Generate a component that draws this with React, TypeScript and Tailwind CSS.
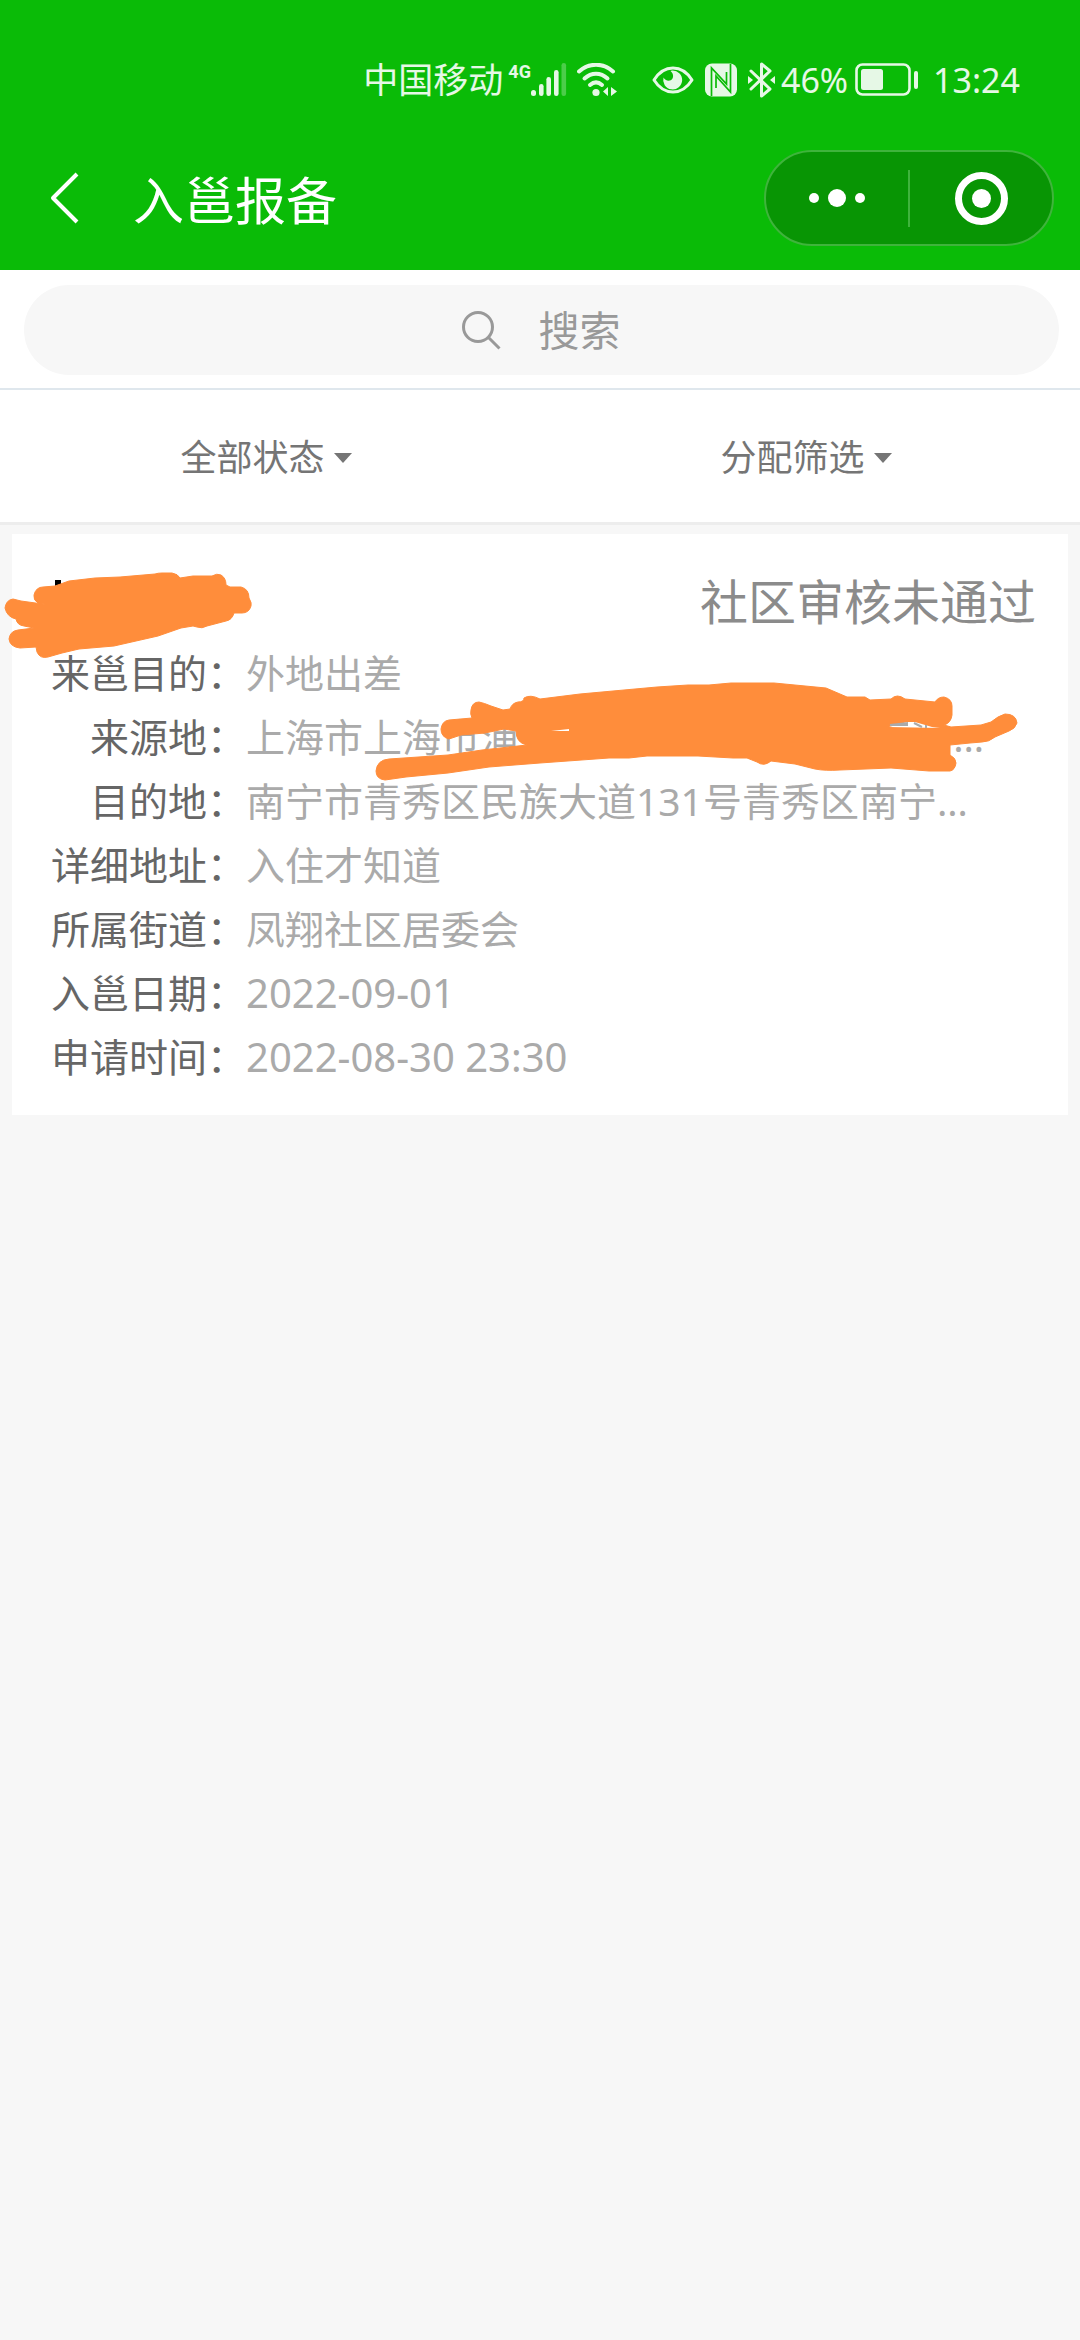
import React from "react";

type Row = { label: string; value: React.ReactNode };

const rows: Row[] = [
  { label: "来邕目的：", value: "外地出差" },
  {
    label: "来源地：",
    value: (
      <span className="flex w-[738px] max-w-full justify-between">
        <span>上海市上海市浦</span>
        <span>…</span>
      </span>
    ),
  },
  {
    label: "目的地：",
    value: "南宁市青秀区民族大道131号青秀区南宁…",
  },
  { label: "详细地址：", value: "入住才知道" },
  { label: "所属街道：", value: "凤翔社区居委会" },
  { label: "入邕日期：", value: <time className="text-[40px]">2022-09-01</time> },
  { label: "申请时间：", value: <time className="text-[40px]">2022-08-30 23:30</time> },
];

function SignalIcon() {
  return (
    <svg className="h-[34px] w-[36px]" viewBox="0 0 36 34" fill="currentColor" aria-label="信号">
      <rect x="0" y="27" width="5" height="6" rx="2.5" />
      <rect x="8" y="21" width="4.6" height="12" rx="2.3" />
      <rect x="15.4" y="14" width="4.6" height="19" rx="2.3" />
      <rect x="23" y="7" width="4.6" height="26" rx="2.3" />
      <rect x="30.5" y="0" width="4.6" height="33" rx="2.3" opacity="0.3" />
    </svg>
  );
}

function WifiIcon() {
  return (
    <svg className="h-[34px] w-[40px]" viewBox="0 0 40 34" fill="none" stroke="currentColor" strokeWidth="4" strokeLinecap="round" aria-label="无线网络">
      <path d="M2 8.5C12 -0.5 26 -0.5 36 8.5" />
      <path d="M7.5 15.5C14.5 9 23.5 9 30.5 15.5" />
      <path d="M13 22C17 18.5 21 18.5 25 22" />
      <circle cx="19" cy="29.5" r="3.6" fill="currentColor" stroke="none" />
      <path d="M31 24v9l-5-4.5zM34 24v9l6-4.5z" fill="currentColor" stroke="none" />
    </svg>
  );
}

function EyeIcon() {
  return (
    <svg className="h-[28px] w-[42px]" viewBox="0 0 42 28" aria-label="护眼模式">
      <path d="M2 14C12 -2 30 -2 40 14C30 30 12 30 2 14Z" fill="none" stroke="currentColor" strokeWidth="3" strokeLinejoin="round" />
      <path d="M20 4.5A9.500 9.500 0 1 1 11.5 11.5C13 15 18.5 16 20.5 12.5C22 9.5 20.5 6.5 18.5 5Z" fill="currentColor" />
    </svg>
  );
}

function NfcIcon() {
  return (
    <svg className="h-[34px] w-[32px]" viewBox="0 0 32 34" aria-label="NFC">
      <rect x="0" y="0.5" width="32" height="33" rx="7" fill="currentColor" />
      <path d="M6.500 33V5L21.500 21V9M25.500 1V29L11 13V25" fill="none" stroke="#0abb07" strokeWidth="1.7" />
    </svg>
  );
}

function BluetoothIcon() {
  return (
    <svg className="h-[36px] w-[27px]" viewBox="0 0 27 36" fill="none" stroke="currentColor" strokeWidth="3" strokeLinejoin="round" strokeLinecap="round" aria-label="蓝牙">
      <path d="M3 9L22 27L13.5 34V2L22 9L3 27" />
      <path d="M0 14l5 4-5 4zM27 14l-5 4 5 4z" fill="currentColor" stroke="none" />
    </svg>
  );
}

function BatteryIcon() {
  return (
    <svg className="h-[34px] w-[64px]" viewBox="0 0 64 34" aria-label="电池">
      <rect x="1.5" y="1.5" width="53" height="30" rx="6" fill="none" stroke="currentColor" strokeWidth="2.6" />
      <rect x="6" y="6" width="22" height="21" rx="2.5" fill="currentColor" />
      <rect x="59" y="8" width="4" height="18" rx="2" fill="currentColor" />
    </svg>
  );
}

function FilterSelect({ label }: { label: string }) {
  return (
    <label className="flex flex-1 items-center justify-center gap-[9px] pr-[8px] pt-[3px]">
      <select aria-label={label} className="w-[144px] appearance-none bg-transparent text-[36px] leading-[52px] text-[#757575] outline-none">
        <option>{label}</option>
      </select>
      <svg className="h-[10px] w-[18px]" viewBox="0 0 18 10" fill="#757575" aria-hidden="true">
        <path d="M0 0H18L9 10Z" />
      </svg>
    </label>
  );
}

function Redactions() {
  return (
    <svg className="pointer-events-none absolute left-0 top-0 h-[600px] w-[1080px]" viewBox="0 525 1080 600" aria-hidden="true">
      <path d="M55 580h6v7h-6z" fill="#000" />
      <g fill="#ff8d3b" stroke="#ff8d3b" strokeWidth="1" strokeLinejoin="round">
        <path d="M38 603Q33 600 34 595Q36 587 43 587L55 586L69 581L95 578L120 577L155 574Q158 573 162 573H172Q178 574 180 578L193 576H212Q217 573 221 575Q226 578 226 585L230 587H241Q249 589 249 598Q252 603 251 606Q249 613 242 613H234Q232 620 226 621L207 626Q202 629 197 627L193 626L181 628L158 636L114 646L79 649L62 653L48 657Q40 659 37 652L36 647L20 648Q10 647 9 639Q10 631 18 630L34 628L24 626Q17 625 16 619Q7 617 5 608Q6 600 13 599L21 601L50 605Z" />
        <path d="M471 710Q472 702 479 702Q484 703 491 706L503 710L510 709Q512 703 518 702Q524 702 524 698Q530 694 540 699L580 694L657 687L688 685H709L731 683H774L826 688L847 697H865L870 700L891 699Q897 693 905 699L935 702Q938 697 944 697Q952 699 952 706V715Q951 723 944 725L951 727L981 725L991 722Q998 716 1005 714Q1016 714 1017 723Q1015 729 1009 731L995 737Q989 742 982 742L970 743L950 745V755Q956 758 956 763Q955 770 950 771H929L891 768L840 770Q825 771 815 769L795 764L771 761Q764 767 757 762L747 758H733L698 756H647L629 758H609L540 763L489 767L448 773L406 777L385 780Q376 779 376 771Q377 760 389 759L448 755L482 750L527 745Q516 743 516 731L504 729L485 733L461 735L449 739Q441 737 441 729Q442 721 449 720L472 718Q470 714 471 710Z" />
      </g>
      <path d="M551 731L569 729V731ZM889 727L907 722H915L932 727L940 728Z" fill="#fff" />
      <path d="M890 725L907 723V725ZM914 723L922 727M926 725v3" fill="#aaa" stroke="#aaa" strokeWidth="2" />
    </svg>
  );
}

export default function App() {
  return (
    <div className="min-h-screen bg-[#f7f7f7] font-['Noto_Sans','Noto_Sans_CJK_SC',sans-serif]">
      <header className="bg-[#0abb07] text-white">
        <div className="flex h-[126px] items-center justify-end pr-[60px] pt-[34px] text-[34px] text-white/90">
          <span className="text-[35px]">中国移动</span>
          <span className="ml-[5px] self-start font-['Roboto',sans-serif] text-[18px] font-bold leading-[76px]">4G</span>
          <SignalIcon />
          <span className="ml-[10px] flex"><WifiIcon /></span>
          <span className="ml-[35px] flex"><EyeIcon /></span>
          <span className="ml-[11px] flex"><NfcIcon /></span>
          <span className="ml-[11px] flex"><BluetoothIcon /></span>
          <span className="ml-[6px]">46%</span>
          <span className="ml-[7px] flex"><BatteryIcon /></span>
          <span className="ml-[14px]">13:24</span>
        </div>
        <div className="flex h-[144px] items-center pl-[48px] pr-[26px]">
          <button aria-label="返回" className="flex">
            <svg className="h-[54px] w-[32px]" viewBox="0 0 32 54" fill="none" stroke="currentColor" strokeWidth="4">
              <path d="M29 3L5 27L29 51" strokeLinejoin="round" />
            </svg>
          </button>
          <h1 className="ml-[53px] flex-1 pt-[4px] text-[51px] leading-[72px]">入邕报备</h1>
          <div className="flex h-[96px] w-[290px] items-center rounded-full border-2 border-[#3fb43c] bg-[#089504]">
            <button aria-label="更多" className="flex flex-1 items-center justify-center gap-[9px]">
              <span className="size-[10px] rounded-full bg-white" />
              <span className="size-[18px] rounded-full bg-white" />
              <span className="size-[10px] rounded-full bg-white" />
            </button>
            <span className="h-[57px] w-[2px] bg-[#3fb43c]" />
            <button aria-label="关闭" className="flex flex-1 items-center justify-center">
              <span className="flex size-[53px] items-center justify-center rounded-full border-[7px] border-white">
                <span className="size-[19px] rounded-full bg-white" />
              </span>
            </button>
          </div>
        </div>
      </header>

      <form className="border-b-2 border-[#dfe7ed] bg-white pb-[13px] pl-[24px] pr-[21px] pt-[15px]">
        <label className="flex h-[90px] items-center justify-center rounded-full bg-[#f7f7f7]">
          <svg className="h-[40px] w-[40px]" viewBox="0 0 40 40" fill="none" stroke="#999" strokeWidth="3" aria-hidden="true">
            <circle cx="17" cy="17" r="14.5" />
            <path d="M27 27L38.5 38.5" />
          </svg>
          <input type="text" aria-label="搜索" placeholder="搜索" className="ml-[38px] w-[84px] bg-transparent text-[41px] leading-[60px] text-[#999] outline-none placeholder:text-[#999]" />
        </label>
      </form>

      <div className="flex h-[135px] border-b-3 border-[#ededed] bg-white">
        <FilterSelect label="全部状态" />
        <FilterSelect label="分配筛选" />
      </div>

      <main className="relative px-[12px] pt-[9px]">
        <article className="bg-white pb-[26px] pl-[39px] pr-[32px] pt-[29px]">
          <p className="text-right text-[48px] leading-[78px] text-[#8b8b8b]">社区审核未通过</p>
          <dl className="text-[39px] leading-[64px]">
            {rows.map((row) => (
              <div key={row.label} className="flex">
                <dt className="w-[195px] shrink-0 text-right text-[#666]">{row.label}</dt>
                <dd className="min-w-0 flex-1 text-[#aaa]">{row.value}</dd>
              </div>
            ))}
          </dl>
        </article>
        <Redactions />
      </main>
    </div>
  );
}
